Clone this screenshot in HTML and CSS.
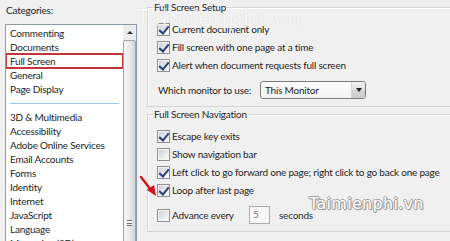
FILE: index.html
```html
<!DOCTYPE html>
<html>
<head>
<meta charset="utf-8">
<link rel="stylesheet" href="styles.css">
</head>
<body>
<div class="window">
  <aside class="cats">
    <div class="cats-label">Categories:</div>
    <div class="listbox">
      <ul class="items">
        <li>Commenting</li>
        <li>Documents</li>
        <li class="sel">Full Screen</li>
        <li>General</li>
        <li>Page Display</li>
        <li class="sep"></li>
        <li>3D &amp; Multimedia</li>
        <li>Accessibility</li>
        <li>Adobe Online Services</li>
        <li>Email Accounts</li>
        <li>Forms</li>
        <li>Identity</li>
        <li>Internet</li>
        <li>JavaScript</li>
        <li>Language</li>
        <li>Measuring (2D)</li>
      </ul>
      <div class="vscroll">
        <div class="sb-up"></div>
        <div class="thumb"><span class="grip"></span></div>
      </div>
    </div>
  </aside>
  <main class="panel">
    <fieldset class="group setup">
      <legend>Full Screen Setup</legend>
      <div class="rows">
        <div class="row"><span class="cb checked"></span><span>Current document only</span></div>
        <div class="row"><span class="cb checked"></span><span>Fill screen with one page at a time</span></div>
        <div class="row"><span class="cb checked"></span><span>Alert when document requests full screen</span></div>
        <div class="row monitor">
          <span class="monitor-label">Which monitor to use:</span>
          <div class="combo"><span>This Monitor</span><span class="combo-btn"></span></div>
        </div>
      </div>
    </fieldset>
    <fieldset class="group nav">
      <legend>Full Screen Navigation</legend>
      <div class="rows">
        <div class="row"><span class="cb checked"></span><span>Escape key exits</span></div>
        <div class="row"><span class="cb"></span><span>Show navigation bar</span></div>
        <div class="row"><span class="cb checked"></span><span>Left click to go forward one page; right click to go back one page</span></div>
        <div class="row"><span class="cb checked"></span><span>Loop after last page</span></div>
        <div class="row advance">
          <span class="cb"></span><span class="adv-label">Advance every</span>
          <span class="num">5</span><span class="secs">seconds</span>
        </div>
      </div>
    </fieldset>
  </main>
  <svg class="annot" width="22" height="24" viewBox="0 0 22 24">
    <path d="M1 1 L11 14" stroke="#d4141b" stroke-width="2.4" stroke-linecap="round" fill="none"/>
    <path d="M7 14 L16 20 L14 9 Z" fill="#d4141b"/>
  </svg>
  <div class="wm wm-top">Taimienphi.vn</div>
  <div class="wm wm-bottom">Taimienphi.vn</div>
</div>
</body>
</html>
```

FILE: styles.css
```css
* { box-sizing: border-box; }
html, body { margin: 0; padding: 0; }
body {
  width: 450px;
  height: 241px;
  overflow: hidden;
  background: #f0f0f0;
  font-family: "Lato", "Noto Sans", sans-serif;
  font-size: 10px;
  letter-spacing: -0.22px;
  color: #1e1e1e;
}
.window {
  position: relative;
  display: flex;
  height: 241px;
}
.cats {
  flex: none;
  width: 147px;
  padding-left: 5px;
}
.cats-label {
  line-height: 14px;
  margin-top: 3px;
  padding-left: 1px;
}
.listbox {
  margin-top: 7px;
  width: 132px;
  height: 232px;
  border: 1px solid #8e9aa6;
  background: #fff;
  display: flex;
  overflow: hidden;
}
.items {
  list-style: none;
  margin: 0;
  padding: 1px 0 0;
  width: 117px;
  flex: none;
}
.items li {
  height: 14px;
  line-height: 14px;
  padding-left: 4px;
  white-space: nowrap;
}
.items li.sel {
  outline: 2px solid #c3343b;
  outline-offset: -1px;
}
.items li.sep {
  display: flex;
  align-items: center;
  padding: 0 4px;
}
.items li.sep::before {
  content: "";
  flex: 1;
  height: 1px;
  background: #9ec6e2;
}
.vscroll {
  flex: none;
  width: 13px;
  display: flex;
  flex-direction: column;
  background: #ececec;
}
.sb-up {
  height: 15px;
  display: flex;
  align-items: center;
  justify-content: center;
}
.sb-up::before {
  content: "";
  border-left: 3px solid transparent;
  border-right: 3px solid transparent;
  border-bottom: 3px solid #333;
}
.thumb {
  flex: 1;
  border: 1px solid #a3a3a3;
  border-radius: 2px;
  background: linear-gradient(to right, #f7f7f7, #e6e6e6 60%, #d4d4d4);
  display: flex;
  flex-direction: column;
  align-items: center;
}
.grip {
  margin-top: 179px;
  width: 5px;
  height: 6px;
  border-top: 1px solid #707070;
  border-bottom: 1px solid #707070;
  background: linear-gradient(#f0f0f0 2px, #707070 2px, #707070 3px, #f0f0f0 3px);
}
.panel {
  flex: 1;
  min-width: 0;
  display: flex;
  flex-direction: column;
}
fieldset.group {
  margin: 0;
  width: 330px;
  border: 1px solid #d3d7db;
  box-shadow: inset 1px 1px 0 #fff;
  padding: 0 0 7px 5px;
  min-width: 0;
}
.setup { margin-top: 2px; }
.nav { margin-top: 9px; }
legend {
  padding: 0 1px;
  line-height: 14px;
}
.rows {
  display: flex;
  flex-direction: column;
  padding-top: 6px;
}
.row {
  height: 18px;
  display: flex;
  align-items: center;
  gap: 2px;
  padding-left: 4px;
  white-space: nowrap;
}
.cb {
  flex: none;
  width: 13px;
  height: 13px;
  border: 1px solid #8f9091;
  background: linear-gradient(135deg, #c9ccd2, #eef0f2 70%, #fbfbfb);
  box-shadow: inset 0 0 0 1px #f4f4f4;
  position: relative;
}
.cb.checked::after {
  content: "";
  position: absolute;
  left: 3px;
  top: 0px;
  width: 4px;
  height: 8px;
  border-right: 2px solid #2c3f7a;
  border-bottom: 2px solid #2c3f7a;
  transform: rotate(40deg);
}
.monitor {
  margin-top: 7px;
  padding-left: 5px;
  gap: 0;
}
.monitor-label {
  width: 102px;
}
.combo {
  width: 106px;
  height: 18px;
  border: 1px solid #7a7a7a;
  border-radius: 3px;
  background: linear-gradient(#fdfdfd, #f3f3f3);
  display: flex;
  align-items: stretch;
  justify-content: space-between;
  padding-left: 4px;
}
.combo span:first-child {
  line-height: 16px;
}
.combo-btn {
  width: 14px;
  border-left: 1px solid #d6d6d6;
  border-radius: 0 2px 2px 0;
  background: linear-gradient(#f2f2f2, #e1e1e1 50%, #d3d3d3 50%, #cfcfcf);
  display: flex;
  align-items: center;
  justify-content: center;
}
.combo-btn::before {
  content: "";
  border-left: 3px solid transparent;
  border-right: 3px solid transparent;
  border-top: 4px solid #222;
}
.advance {
  margin-top: 7px;
  gap: 0;
}
.advance .adv-label {
  width: 79px;
  padding-left: 2px;
}
.num {
  width: 21px;
  height: 18px;
  border: 1px solid #a9abb2;
  background: #f6f6f6;
  color: #777;
  padding: 0 0 0 3px;
  line-height: 14px;
}
.secs {
  margin-left: 9px;
  color: #2a2a2a;
}
.annot {
  position: absolute;
  left: 140px;
  top: 176px;
}
.wm {
  position: absolute;
  font-family: "DejaVu Sans", sans-serif;
  white-space: nowrap;
  pointer-events: none;
  letter-spacing: 0;
}
.wm-top {
  left: 136px;
  top: 5px;
  font-size: 23px;
  color: rgba(255, 255, 255, 0.75);
  text-shadow: 0 0 1px rgba(0, 0, 0, 0.12);
  letter-spacing: 0.5px;
}
.wm-bottom {
  left: 309px;
  top: 194px;
  font-size: 16px;
  color: #fff;
  text-shadow: 1px 0 0 #a0a0a0, -1px 0 0 #a0a0a0, 0 1px 0 #a0a0a0, 0 -1px 0 #a0a0a0, 1px 1px 1px #8a8a8a;
  letter-spacing: 0.3px;
}
```
